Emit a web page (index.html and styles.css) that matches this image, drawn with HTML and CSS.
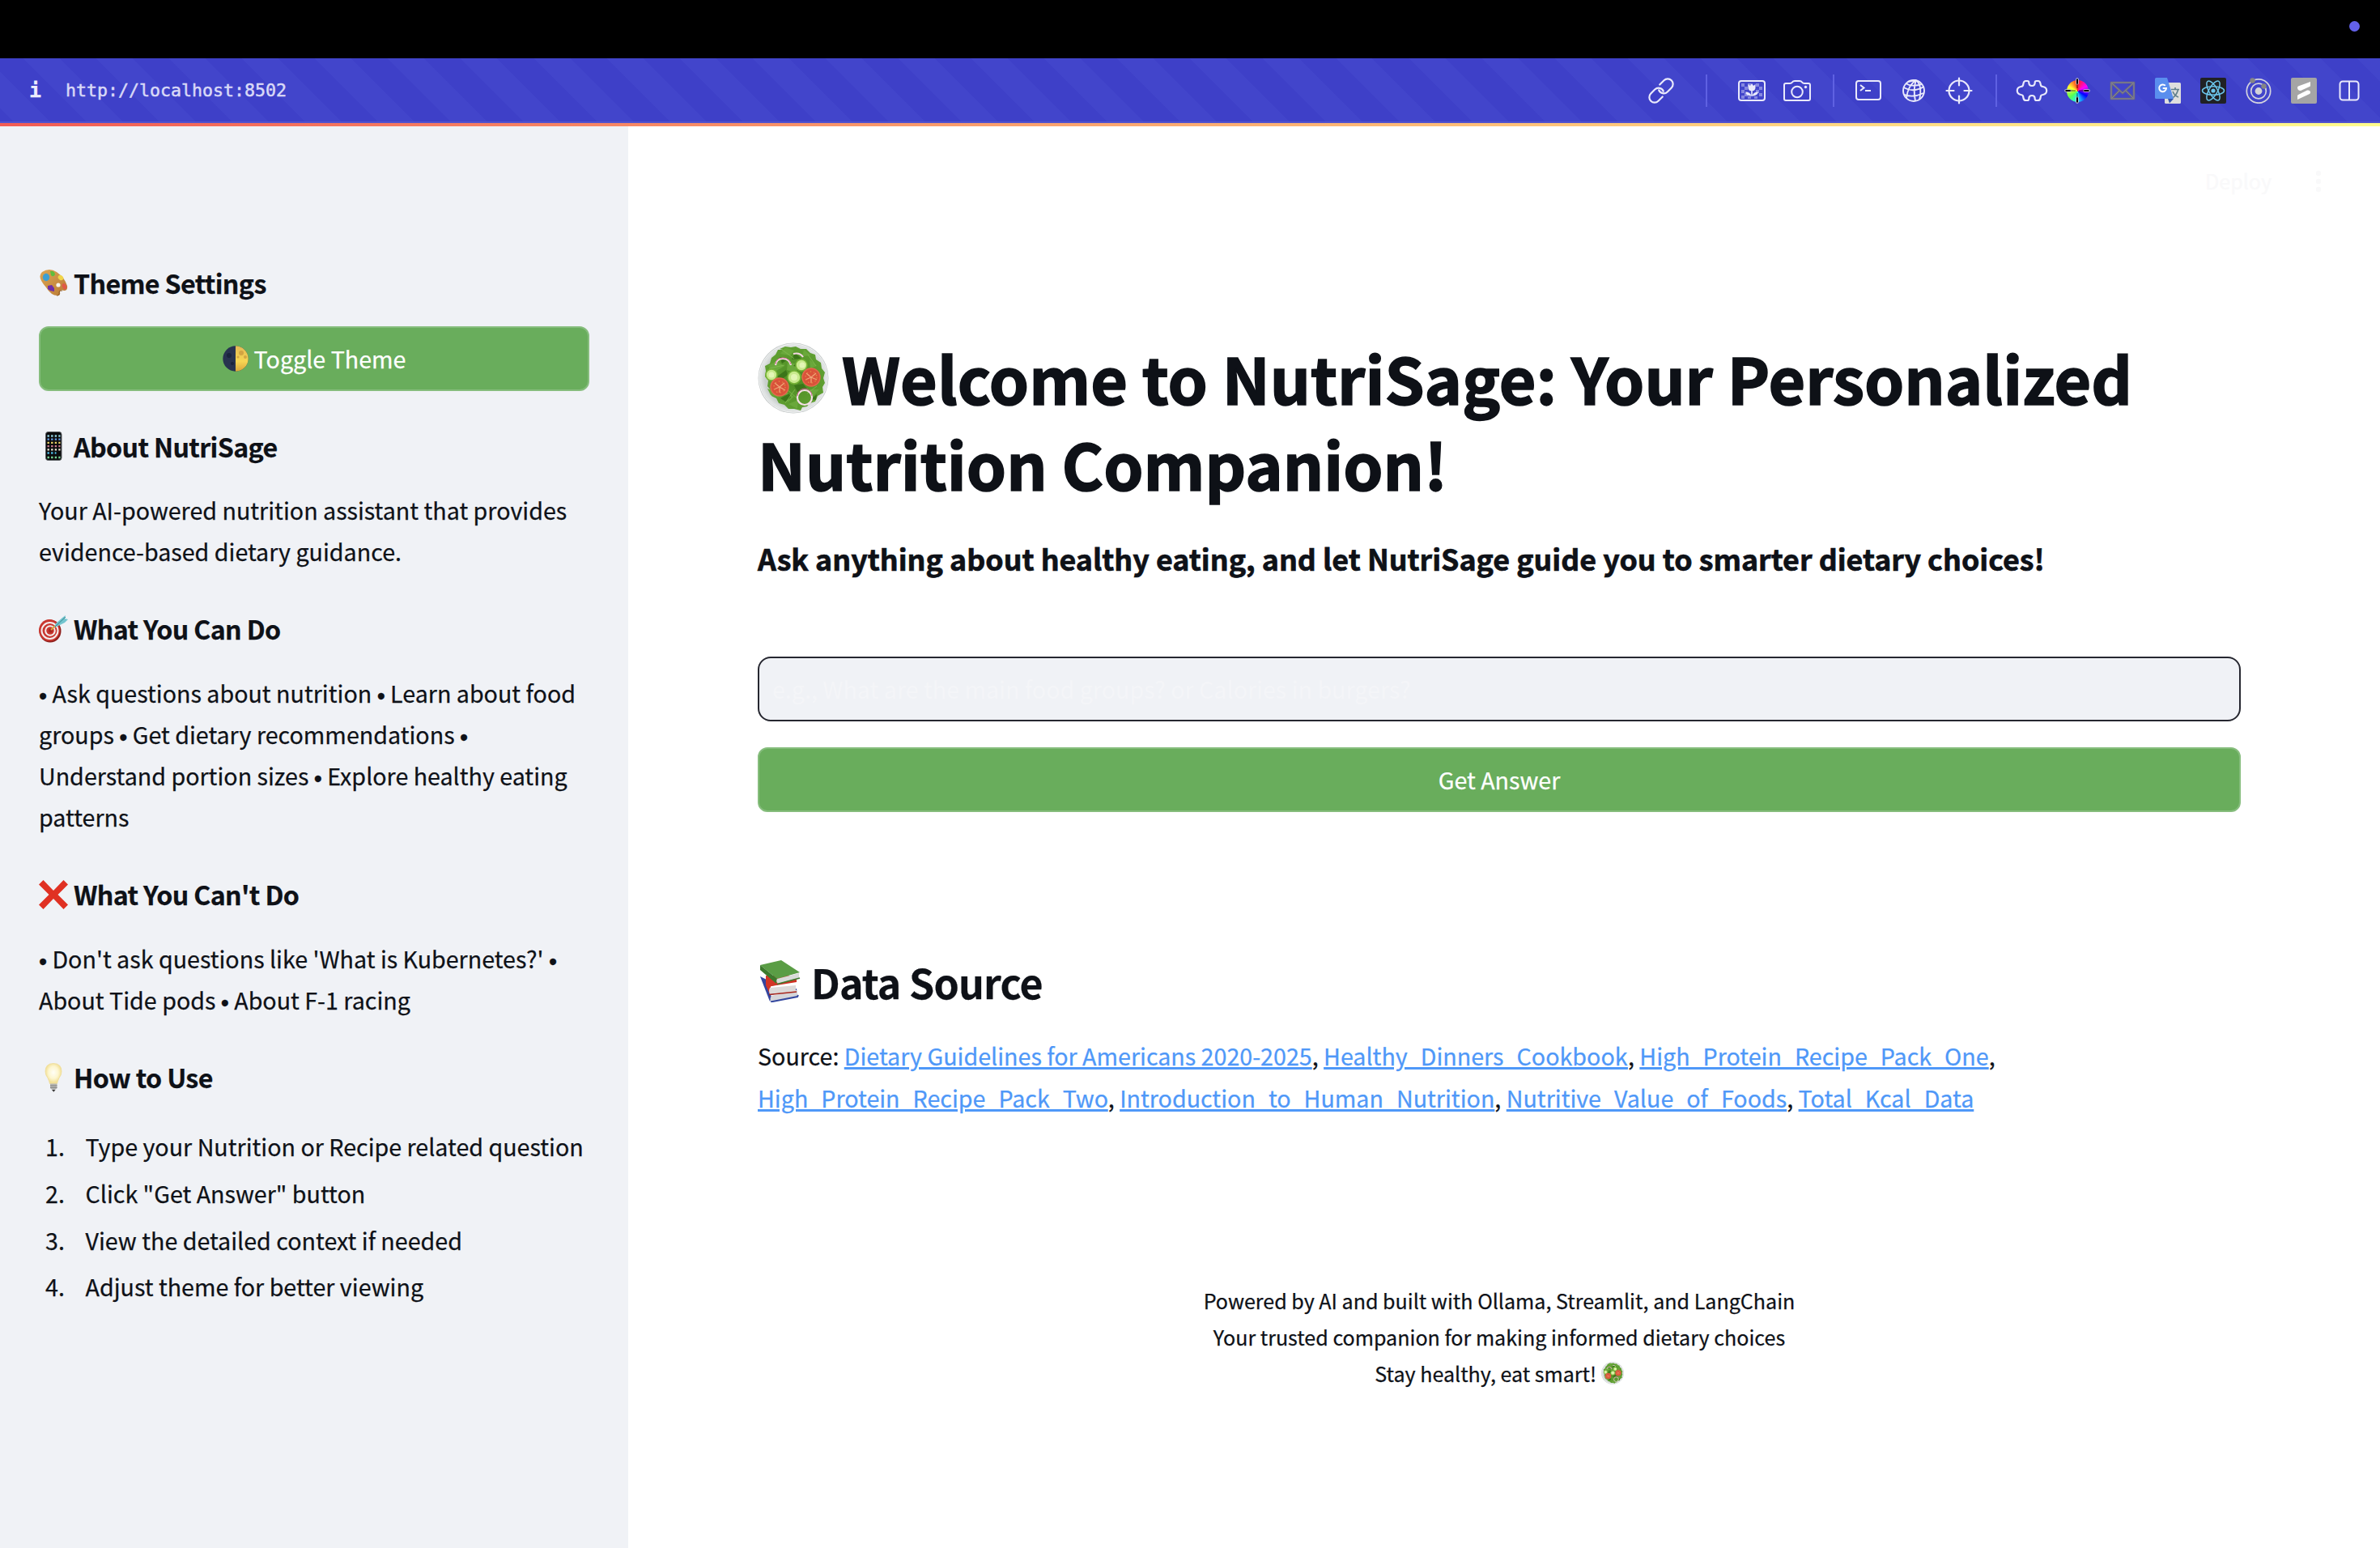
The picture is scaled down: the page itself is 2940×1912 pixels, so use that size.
FILE: index.html
```html
<!DOCTYPE html>
<html lang="en">
<head>
<meta charset="utf-8">
<title>NutriSage</title>
<link rel="stylesheet" href="styles.css">
</head>
<body>
<svg class="defs" width="0" height="0" aria-hidden="true">
  <defs>
    <radialGradient id="plate"><stop offset=".8" stop-color="#c9cfcd"/><stop offset=".93" stop-color="#e3e6e6"/><stop offset="1" stop-color="#c3c7c7"/></radialGradient>
    <radialGradient id="leaf"><stop offset="0" stop-color="#4c8a22"/><stop offset="1" stop-color="#5f9f31"/></radialGradient>
    <linearGradient id="wood" x1="0" y1="0" x2="1" y2="1"><stop offset="0" stop-color="#dda653"/><stop offset="1" stop-color="#b97a35"/></linearGradient>
    <linearGradient id="moonlit" x1="0" y1="0" x2="0" y2="1"><stop offset="0" stop-color="#e3b955"/><stop offset=".6" stop-color="#f7d653"/><stop offset="1" stop-color="#d9a63c"/></linearGradient>
    <radialGradient id="glow" cx=".5" cy=".45"><stop offset="0" stop-color="#fffef6"/><stop offset=".6" stop-color="#fdf6cf"/><stop offset="1" stop-color="#f2df95"/></radialGradient>
    <symbol id="salad" viewBox="0 0 88 88">
      <circle cx="44" cy="44" r="43.5" fill="url(#plate)"/>
      <circle cx="44" cy="44" r="42.2" fill="none" stroke="#f3f5f5" stroke-width="1"/>
      <path d="M27 8l7-3 7 1 6-1 6 3 7 0 5 5 6 2 1 6 6 4 1 7 4 5-2 7 2 6-3 5 1 7-7 4-3 7-7 2-3 4-6 1-2 4-8-2-7 0-5-5-7-2-3-6-6-3-1-7-4-5 1-7-4-5 1-7-1-6 6-3 2-7 5-4 3-6 6 0z" fill="url(#leaf)"/>
      <g fill="#6aa83b"><path d="M34 6l11 4-5 6-12-2zM57 9l9 7-11 1zM12 29l11-6 10 6-10 6zM37 24l12 3-1 11-12-4zM64 21l9 8-8 3zM12 57l9 3 5 8-10-3zM33 60l12 7-8 7zM64 58l12 0-9 10zM38 76l12-5-1 11z"/></g>
      <g fill="#3b7519"><path d="M27 18l10 3-7 5zM46 13l8 7-12 1zM24 42l11-8 2 6-8 6zM45 53l11-2 5 6-12 4zM28 69l11-6 2 5-7 5zM68 35l8 3-5 4zM66 70l7-6-1 7zM51 22l-7 7 9 2z"/></g>
      <g fill="none" stroke="#83bd50" stroke-width=".8"><path d="M30 9l15 11M14 32l19-4M34 75l12-17M62 15l10 14M50 70l-14-12M73 54l-12 9"/></g>
      <g fill="none" stroke-width="2.2"><path d="M22 28q1-8 9-8t10 8" stroke="#f8dfea"/><path d="M22 27q1-8 9-8t10 8" stroke="#d86d9a" stroke-width="1"/><path d="M44 14q8-2 12 4" stroke="#f5d5e3"/><circle cx="58" cy="68" r="9" stroke="#f6dfe8"/><path d="M49 66a9 9 0 0 1 18 0" stroke="#cc6390" stroke-width="1"/></g>
      <g fill="#c9ea8e" stroke="#76b336" stroke-width="1.6"><circle cx="17" cy="40" r="7"/><circle cx="54" cy="28" r="7"/><circle cx="45" cy="43" r="8"/></g>
      <g fill="#e3f6b5"><circle cx="17" cy="40" r="3.5"/><circle cx="55" cy="28" r="3.5"/><circle cx="45" cy="43" r="4"/></g>
      <g fill="#d9523a" stroke="#e5684c" stroke-width="1.4"><circle cx="27" cy="55" r="11"/><circle cx="66" cy="43" r="11"/></g>
      <g stroke="#f0a577" stroke-width="1.3" fill="none"><path d="M27 55l-6-5M27 55l6-5M27 55v7M27 55l-7 3M27 55l7 4M66 43l-6-5M66 43l6-5M66 43v7M66 43l-7 3M66 43l7 3"/></g>
      <g fill="none" stroke="#e08a45" stroke-width="1.3" stroke-dasharray="1.5 3"><circle cx="27" cy="55" r="7"/><circle cx="66" cy="43" r="7"/></g>
    </symbol>
  </defs>
</svg>

<div class="menubar"><span class="status-dot"></span></div>

<header class="toolbar">
  <span class="info">i</span>
  <span class="url">http://localhost:8502</span>
  <div class="tools">
    <span class="tool"><svg width="32" height="32" viewBox="0 0 32 32"><g fill="none" stroke="#e9e9fb" stroke-width="2.2" stroke-linecap="round" transform="rotate(-45 16 16)"><path d="M13 22.5H5.500a6.500 6.500 0 0 1 0-13H12.500a6.500 6.500 0 0 1 6 9" transform="translate(-1 0)"/><path d="M19 9.500H26.500a6.500 6.500 0 0 1 0 13H19.500a6.500 6.500 0 0 1-6-9" transform="translate(1 0)"/></g></svg></span>
    <i class="divider wide"></i>
    <span class="tool"><svg width="36" height="28" viewBox="0 0 36 28"><g fill="#8587e0"><path d="M5 5h4v4H5zM13 5h4v4h-4zM23 5h4v4h-4zM9 9h4v4H9zM27 9h4v4h-4zM5 13h4v4H5zM23 13h4v4h-4zM9 17h4v4H9zM27 17h4v4h-4zM5 20h4v4H5zM13 21h4v3h-4zM21 21h4v3h-4z"/></g><rect x="2" y="2" width="32" height="24" rx="3" fill="none" stroke="#e9e9fb" stroke-width="2"/><path d="M13.500 6l2.500 2 2-3 2 3 2.500-2v4q0 4-3.700 4.300V20q1-4.500 7.200-4.500-1 5-8 5.200-7 0-8-5.200 6.200 0 7.200 4.500v-5.700Q13.500 14 13.500 10z" fill="#e9e9fb"/></svg></span>
    <span class="tool"><svg width="36" height="30" viewBox="0 0 36 30"><g fill="none" stroke="#e9e9fb" stroke-width="2"><path d="M4 6h5q2 0 3-1.500T15 3h6q2 0 3 1.500T27 6h5q2 0 2 2v17q0 2-2 2H4q-2 0-2-2V8q0-2 2-2z"/><circle cx="18" cy="16.500" r="6.800"/></g><circle cx="28.500" cy="10.500" r="1.700" fill="#e9e9fb"/></svg></span>
    <i class="divider"></i>
    <span class="tool"><svg width="34" height="28" viewBox="0 0 34 28"><g fill="none" stroke="#e9e9fb" stroke-width="2"><rect x="2" y="2" width="30" height="23" rx="3"/><path d="M7 7l4.500 3.500L7 14M13 14h7"/></g></svg></span>
    <span class="tool"><svg width="30" height="30" viewBox="0 0 30 30"><g fill="none" stroke="#e9e9fb" stroke-width="1.900"><circle cx="15" cy="15" r="13"/><path d="M18 2Q8 8 6 24M18 2q-4 10-1 26M18 2q8 7 4 24M18 2q-6 1-10 2M2.500 11q12 7 25-1M3 20q12 4 24-2M5 6q8 5 20 1"/></g></svg></span>
    <span class="tool"><svg width="34" height="34" viewBox="0 0 34 34"><g fill="none" stroke="#e9e9fb" stroke-width="2.200" stroke-linecap="round"><circle cx="17" cy="17" r="12.500"/><path d="M17 1.500v9M17 23.500v9M1.500 17h9M23.500 17h9"/></g></svg></span>
    <i class="divider late"></i>
    <span class="tool"><svg width="40" height="30" viewBox="0 0 40 30"><path d="M12.500 3H14.500Q16.300 3 16.300 5Q16.300 9 20 9Q23.700 9 23.700 5Q23.700 3 25.500 3H27.500Q30 3 30.500 6L31 8.500Q31.500 9.800 33.500 10Q38.200 10.800 38.200 15Q38.200 19.200 33.500 20Q31.500 20.200 31 21.500L30.500 24Q30 27 27.500 27H25.500Q23.700 27 23.700 25Q23.700 21 20 21Q16.300 21 16.300 25Q16.300 27 14.500 27H12.500Q10 27 9.500 24L9 21.500Q8.500 20.200 6.500 20Q1.800 19.200 1.800 15Q1.800 10.800 6.500 10Q8.500 9.800 9 8.500L9.500 6Q10 3 12.500 3z" fill="none" stroke="#e9e9fb" stroke-width="2.200"/></svg></span>
    <span class="tool"><span class="wheel"><span class="hues"></span><svg width="32" height="32" viewBox="0 0 32 32"><path d="M16 2v5M16 25v5M2 16h5M25 16h5" stroke="#c9c9d6" stroke-width="3.600" stroke-linecap="round"/><path d="M16 1.500v6M16 24.500v6M1.500 16h6M24.500 16h6" stroke="#000" stroke-width="2"/><path d="M7 16h7M18 16h7M16 7v6M16 19v6" stroke="#000" stroke-opacity=".45" stroke-width="1.500"/></svg></span></span>
    <span class="tool"><svg width="32" height="24" viewBox="0 0 32 24"><g fill="none"><path d="M2 2h28v20H2zM3 3l13 12L29 3M3 21l9-9M29 21l-9-9" stroke="#6a6a80" stroke-width="2.600"/><path d="M2 2h28v20H2zM3 3l13 12L29 3M3 21l9-9M29 21l-9-9" stroke="#8a8a98" stroke-width=".8"/></g></svg></span>
    <span class="tool"><svg width="32" height="32" viewBox="0 0 32 32"><rect x="12" y="6" width="20" height="26" rx="1.500" fill="#dedede"/><path d="M20 14.500h10M25 12v2.500M28.500 15q-2 7-7 10M22 17q2 5 7 7" stroke="#62808c" stroke-width="1.700" fill="none"/><path d="M16 26h7l-5 5.500z" fill="#3455ae"/><path d="M1.500 0H15l8 26H1.500Q0 26 0 24.500v-23Q0 0 1.500 0z" fill="#5a8eee"/><path d="M12.800 9.800A4.400 4.400 0 1 0 14 13H9.700" fill="none" stroke="#fff" stroke-width="2"/></svg></span>
    <span class="tool"><svg width="32" height="32" viewBox="0 0 32 32"><rect width="32" height="32" rx="2" fill="#202124"/><g fill="none" stroke="#6cc5ea" stroke-width="1.500"><ellipse cx="16" cy="16" rx="13.500" ry="5.200"/><ellipse cx="16" cy="16" rx="13.500" ry="5.200" transform="rotate(60 16 16)"/><ellipse cx="16" cy="16" rx="13.500" ry="5.200" transform="rotate(120 16 16)"/></g><circle cx="16" cy="16" r="2.600" fill="#6cc5ea"/></svg></span>
    <span class="tool"><svg width="32" height="32" viewBox="0 0 32 32"><g fill="none" stroke="#d3d3de" stroke-width="1.700"><circle cx="16" cy="16.500" r="14.700"/><circle cx="16" cy="16.500" r="9.300"/></g><circle cx="16" cy="16.500" r="4.400" fill="#d3d3d8"/><circle cx="8.500" cy="3.500" r="3.200" fill="#858585"/><circle cx="22.500" cy="10.500" r="3.200" fill="#858585"/></svg></span>
    <span class="tool"><svg width="32" height="32" viewBox="0 0 32 32"><rect width="32" height="32" rx="2" fill="#a5a5a5"/><path d="M8 12q0-1 1-1.500L24 5v4.500q0 1-1 1.500L12 16q-4 0-4-4zM24 18q0-3-4-2.500L9 21q-1 .5-1 1.500V27l15-7q1-.5 1-2z" fill="#fff"/></svg></span>
    <span class="tool"><svg width="28" height="28" viewBox="0 0 28 28"><g fill="none" stroke="#e9e9fb" stroke-width="2"><rect x="2.500" y="2.500" width="23" height="23" rx="3.500"/><path d="M14 2.500v23"/></g></svg></span>
  </div>
</header>
<div class="accent"></div>

<div class="app">
  <aside class="sidebar">
    <h3><svg class="emo" viewBox="0 0 36 36"><path d="M4 5Q13-1 22 5q10 7 13 17 1 6-4 6-5-2-5 2 1 4-3 4-8 0-14-10Q-3 11 4 5z" fill="url(#wood)"/><path d="M22 34q4 0 3-4 0-3 4-2" stroke="#8d5a26" fill="none"/><ellipse cx="9" cy="11.500" rx="4.200" ry="4.700" fill="#3d9fd2"/><path d="M14 4q5-1 6 4-2 4-5 1z" fill="#5fbd3d"/><ellipse cx="27" cy="12" rx="3.600" ry="2.800" fill="#f0d449" transform="rotate(40 27 12)"/><path d="M11 22l5-1 3 4 0 4-5-1-3-2z" fill="#6e2fa8"/><circle cx="24" cy="21" r="2.600" fill="#f8f3ec"/><ellipse cx="31.500" cy="23" rx="2.500" ry="3.800" fill="#e05a48" transform="rotate(-25 31 23)"/></svg>Theme Settings</h3>
    <button class="btn toggle"><svg class="emo" viewBox="0 0 32 32"><circle cx="16" cy="16" r="15.700" fill="#28334f"/><path d="M16 .3a15.700 15.700 0 0 1 0 31.400z" fill="url(#moonlit)"/><g fill="#c8963c" opacity=".7"><circle cx="23" cy="9" r="3"/><circle cx="28" cy="14" r="2"/><circle cx="19" cy="14" r="1.500"/></g><g fill="#1a243c"><circle cx="8" cy="12" r="3"/><circle cx="12" cy="22" r="2"/></g></svg>Toggle Theme</button>
    <h3 class="after-btn"><svg class="emo" viewBox="0 0 36 36"><rect x="8.500" y=".5" width="19.500" height="35" rx="3" fill="#0b0b0d" stroke="#55595c"/><g stroke-width="2.300" stroke-dasharray="2.400 2.200"><path d="M10.500 5.500h16" stroke="#8fd0dd"/><path d="M10.500 9.700h16" stroke="#6a9fe8"/><path d="M10.500 13.900h16" stroke="#e6cf66"/><path d="M10.500 18.100h16" stroke="#ca7b8e"/><path d="M10.500 22.300h16" stroke="#ecebd8"/><path d="M10.500 26.500h11" stroke="#4db7e0"/><path d="M10.500 32h16" stroke="#78d596"/></g></svg>About NutriSage</h3>
    <p>Your AI-powered nutrition assistant that provides<br>evidence-based dietary guidance.</p>
    <h3><svg class="emo" viewBox="0 0 36 36"><ellipse cx="14" cy="20.500" rx="13.500" ry="14" fill="#8e1f1c"/><ellipse cx="13" cy="19.500" rx="13" ry="13.500" fill="#c93830"/><g fill="none" stroke="#f4eeee" stroke-width="2"><circle cx="13.500" cy="20" r="10"/><circle cx="14" cy="20" r="5.800"/></g><circle cx="14.500" cy="20" r="2.500" fill="#a92722"/><path d="M15 19l5-5" stroke="#d7a83d" stroke-width="2"/><path d="M19 16l2-5 8-7 4-3-1 4 4 1-4 4-8 4z" fill="#73c5cf"/><path d="M20 15l13-12" stroke="#34868f"/></svg>What You Can Do</h3>
    <p><span class="dot">•</span> Ask questions about nutrition <span class="dot">•</span> Learn about food<br>groups <span class="dot">•</span> Get dietary recommendations <span class="dot">•</span><br>Understand portion sizes <span class="dot">•</span> Explore healthy eating<br>patterns</p>
    <h3><svg class="emo" viewBox="0 0 36 36"><path d="M5.500 0L18 13 30.500 0 36 5.500 23.500 18 36 30.500 30.500 36 18 23 5.500 36 0 30.500 12.500 18 0 5.500z" fill="#e03123"/></svg>What You Can't Do</h3>
    <p><span class="dot">•</span> Don't ask questions like 'What is Kubernetes?' <span class="dot">•</span><br>About Tide pods <span class="dot">•</span> About F-1 racing</p>
    <h3><svg class="emo" viewBox="0 0 36 36"><path d="M18 .5q10 0 10 10 0 4-3 8-2 4-2.500 7h-9q-.5-3-2.500-7-3-4-3-8 0-10 10-10z" fill="url(#glow)" stroke="#efdc96" stroke-width=".8"/><path d="M14 25.500h8.500v5.500q-1 2-4.200 2T14 31z" fill="#b5b5b3"/><path d="M14 28h8.500M14 30.500h8.500" stroke="#858583"/><path d="M16 33h4.500l-2.200 2.700z" fill="#3a3a38"/></svg>How to Use</h3>
    <ol>
      <li>Type your Nutrition or Recipe related question</li>
      <li>Click "Get Answer" button</li>
      <li>View the detailed context if needed</li>
      <li>Adjust theme for better viewing</li>
    </ol>
  </aside>

  <main class="main">
    <div class="deploy"><span>Deploy</span><svg width="8" height="28" viewBox="0 0 8 28" fill="#f9f9fa"><circle cx="4" cy="4" r="3.200"/><circle cx="4" cy="14" r="3.200"/><circle cx="4" cy="24" r="3.200"/></svg></div>
    <h1><svg class="salad"><use href="#salad"/></svg>Welcome to NutriSage: Your Personalized<br>Nutrition Companion!</h1>
    <p class="lead">Ask anything about healthy eating, and let NutriSage guide you to smarter dietary choices!</p>
    <div class="field">e.g., What are the main food groups? or Calories in burgers?</div>
    <button class="btn">Get Answer</button>
    <h2><svg class="books" viewBox="0 0 50 52"><path d="M0 20l8 4 6 22-2 5z" fill="#34459f"/><path d="M14 44l32-7v8l-32 6q-3-3 0-7z" fill="#d5d5d9"/><path d="M13 51.500L46 45l1-2M12 42l33-6" stroke="#33479f" stroke-width="2" fill="none"/><path d="M7 19l9 10 29-5v3L14 32l-4 2z" fill="#cd2f22"/><path d="M7 19v12l5 11 1-10 32-7-4-6z" fill="#d33526"/><path d="M12 34l32-3v8l-32 3q-2-4 0-8z" fill="#dcd9d8"/><path d="M11 42.500L45 39" stroke="#a8261d" stroke-width="1.600"/><path d="M0 6L26 0l23 15-28 8z" fill="#5a9d45"/><path d="M0 6v6l20 17 1-6z" fill="#3c7a2d"/><path d="M21 23l27-7v6l-26 7q-3-3-1-6z" fill="#d9dbd9"/><path d="M21 29.500L49 22" stroke="#3c7a2d" stroke-width="1.800"/></svg>Data Source</h2>
    <p class="sources">Source: <a>Dietary Guidelines for Americans 2020-2025</a>, <a>Healthy_Dinners_Cookbook</a>, <a>High_Protein_Recipe_Pack_One</a>,<br><a>High_Protein_Recipe_Pack_Two</a>, <a>Introduction_to_Human_Nutrition</a>, <a>Nutritive_Value_of_Foods</a>, <a>Total_Kcal_Data</a></p>
    <footer>Powered by AI and built with Ollama, Streamlit, and LangChain<br>Your trusted companion for making informed dietary choices<br>Stay healthy, eat smart! <svg class="salad-sm"><use href="#salad"/></svg></footer>
  </main>
</div>
</body>
</html>
```
FILE: styles.css
```css
* { box-sizing: border-box; }
body {
  margin: 0;
  height: 1912px;
  overflow: hidden;
  background: #fff;
  color: #0e1117;
  font-family: "Noto Sans CJK SC", "Noto Sans", sans-serif;
  font-size: 28.65px;
  line-height: 51.2px;
  -webkit-text-stroke-width: .25px;
}
.defs { display: block; height: 0; }
h1, h2, h3, p, ol { margin: 0; padding: 0; white-space: nowrap; }

.menubar {
  height: 72px;
  background: #000;
  display: flex;
  justify-content: flex-end;
  padding: 25.5px 25.5px 0 0;
}
.status-dot { width: 13px; height: 13px; border-radius: 50%; background: #6361ea; }

.toolbar {
  height: 80px;
  display: flex;
  align-items: center;
  padding-right: 10px;
  box-shadow: inset 0 -2px #5052cf;
  background: repeating-linear-gradient(45deg, #3e40c8 0 13px, #4245cb 13px 44.8px, #3e40c8 44.8px 63.7px);
  font-family: "DejaVu Sans Mono", monospace;
  font-size: 21.6px;
  color: #d9d9f7;
}
.info { width: 81px; padding-left: 36px; font-weight: 700; font-size: 25px; color: #ededfd; }
.url { -webkit-text-stroke-width: .5px; }
.tools { margin-left: auto; display: flex; align-items: center; }
.tool { width: 56px; height: 56px; display: flex; align-items: center; justify-content: center; }
.divider { width: 2px; height: 40px; margin: 0 14px 0 16px; background: #5f61e2; }
.divider.wide { margin: 0 27px; }
.divider.late { margin: 0 15px 0 17px; }
.wheel { display: grid; place-items: center; width: 32px; height: 32px; }
.wheel > * { grid-area: 1 / 1; }
.hues {
  width: 27px;
  height: 27px;
  border-radius: 50%;
  background: conic-gradient(#f22, #f0f 17%, #00f 33%, #2ef 50%, #5f5 64%, #ff3 82%, #f22);
}
.accent { height: 4px; background: linear-gradient(90deg, #f25c54, #f57a60 18%, #ffc97c 69%, #ffe388 84%, #fffc8e); }

.app { display: flex; height: 1756px; }
.sidebar { width: 776px; padding: 171.5px 48px 0; background: #f0f2f6; }
.sidebar h3 {
  display: flex;
  align-items: center;
  gap: 7px;
  margin-top: 49px;
  font-size: 32.2px;
  line-height: 43.2px;
  font-weight: 600;
  letter-spacing: -.65px;
}
.sidebar h3:first-child { margin-top: 0; }
.sidebar h3.after-btn { margin-top: 47px; }
.sidebar h3 .emo { width: 36px; height: 36px; }
.sidebar p { margin-top: 31px; }
.dot {
  display: inline-block;
  width: 10px;
  font-family: "Liberation Sans", sans-serif;
  font-size: 29px;
  line-height: 0;
  vertical-align: -2px;
}
.btn {
  display: flex;
  align-items: center;
  justify-content: center;
  width: 100%;
  height: 80px;
  padding: 0;
  border: 2px solid #86bd7d;
  border-radius: 12px;
  background: #69ad5c;
  color: #fff;
  font: inherit;
}
.toggle { margin-top: 32px; gap: 7px; }
.toggle .emo { width: 32px; height: 32px; }
.sidebar ol { margin-top: 35px; list-style: none; counter-reset: n; line-height: 57.7px; }
.sidebar li { counter-increment: n; display: flex; padding-left: 8px; }
.sidebar li::before { content: counter(n) "."; width: 49.500px; }

.main { flex: 1; padding: 0 172px 0 160px; }
.deploy {
  display: flex;
  align-items: center;
  justify-content: flex-end;
  gap: 54px;
  height: 44px;
  margin: 46px -100px 168px 0;
  font-size: 25.07px;
  color: #f9f9fa;
}
h1 { font-size: 78.8px; line-height: 105.6px; font-weight: 700; -webkit-text-stroke-width: 1.6px; }
.salad { width: 88px; height: 88px; vertical-align: -11px; margin-right: 16px; }
.lead { margin-top: 39.8px; font-size: 35.8px; line-height: 48px; font-weight: 700; -webkit-text-stroke-width: .7px; }
.field {
  margin-top: 98px;
  height: 80px;
  border: 2px solid #262730;
  border-radius: 16px;
  background: #f0f2f6;
  padding: 12px 16px;
  color: #f4f5f8;
}
.main .btn { margin-top: 32px; }
h2 {
  display: flex;
  align-items: center;
  margin-top: 175.6px;
  font-size: 50.1px;
  line-height: 67.2px;
  font-weight: 600;
  letter-spacing: -.85px;
}
.books { width: 50px; height: 52px; margin: 0 13px 0 3px; }
.sources { margin-top: 32.6px; }
.sources a { color: #4f98f8; text-decoration: underline; text-decoration-thickness: 3px; }
footer { margin-top: 203.4px; font-size: 25.07px; line-height: 44.8px; text-align: center; }
.salad-sm { width: 28px; height: 28px; vertical-align: -3px; }
```
